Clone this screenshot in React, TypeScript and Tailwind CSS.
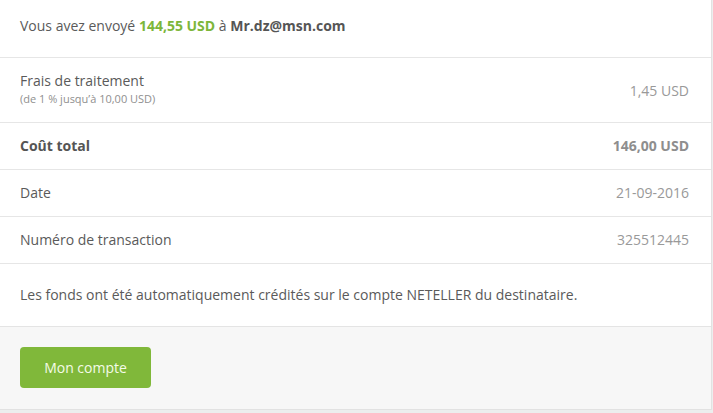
export default function App() {
  const font = { fontFamily: '"Open Sans", "Liberation Sans", sans-serif' };
  return (
    <div className="min-h-[413px] bg-[#eceeee]" style={font}>
      <div className="w-[712px] border-r border-b border-[#e2e2e2] bg-white text-[14px] text-[#5a5a5a]">
        {/* Header */}
        <div className="flex h-[58px] items-center border-b border-[#e6e6e6] px-5 pb-[7px]">
          <span>
            Vous avez envoyé{" "}
            <span className="font-bold text-[#7db63a]">144,55 USD</span> à{" "}
            <span className="font-bold text-[#555]">Mr.dz@msn.com</span>
          </span>
        </div>

        {/* Fees */}
        <div className="flex h-[65px] items-center justify-between border-b border-[#e6e6e6] pl-5 pr-[22px]">
          <div className="flex flex-col pb-[3px]">
            <span className="leading-[20px]">Frais de traitement</span>
            <span className="text-[11px] leading-[16px] text-[#8f8f8f]">
              (de 1 % jusqu’à 10,00 USD)
            </span>
          </div>
          <span className="text-[#999]">1,45 USD</span>
        </div>

        {/* Total */}
        <div className="flex h-[47px] items-center justify-between border-b border-[#e6e6e6] pb-[2px] pl-5 pr-[22px]">
          <span className="font-bold text-[#555]">Coût total</span>
          <span className="font-bold text-[#8e8e8e]">146,00 USD</span>
        </div>

        <div className="flex h-[47px] items-center justify-between border-b border-[#e6e6e6] pb-[2px] pl-5 pr-[22px]">
          <span>Date</span>
          <span className="text-[#999]">21-09-2016</span>
        </div>

        <div className="flex h-[47px] items-center justify-between border-b border-[#e6e6e6] pb-[2px] pl-5 pr-[22px]">
          <span>Numéro de transaction</span>
          <span className="text-[#999]">325512445</span>
        </div>

        {/* Note */}
        <div className="flex h-[63px] items-center border-b border-[#e4e4e4] pb-[2px] px-5">
          Les fonds ont été automatiquement crédités sur le compte NETELLER du destinataire.
        </div>

        {/* Footer */}
        <div className="flex h-[82px] items-start bg-[#f7f7f7] px-5 pt-[20px]">
          <button className="h-[41px] w-[131px] rounded-[4px] bg-[#80b83a] text-[14px] text-[#f4fbe8]">
            Mon compte
          </button>
        </div>
      </div>
    </div>
  );
}
